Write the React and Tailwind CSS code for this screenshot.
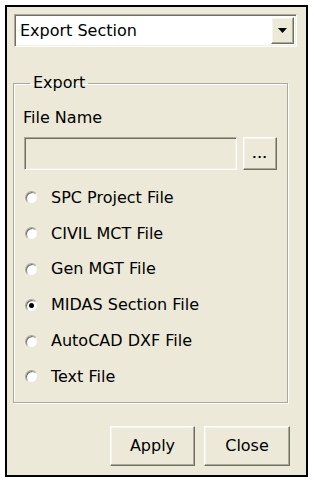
import { useState } from 'react'

const FONT = { fontFamily: '"DejaVu Sans", Verdana, sans-serif' }

const raised =
  'border border-t-white border-l-white border-b-[#716f64] border-r-[#716f64] shadow-[inset_-1px_-1px_0_#aca899,inset_1px_1px_0_#f5f4ea] bg-[#ece9d8]'
const sunken =
  'border border-t-[#aca899] border-l-[#aca899] border-b-white border-r-white shadow-[inset_1px_1px_0_#716f64,inset_-1px_-1px_0_#f1efe2]'

const OPTIONS = [
  'SPC Project File',
  'CIVIL MCT File',
  'Gen MGT File',
  'MIDAS Section File',
  'AutoCAD DXF File',
  'Text File',
]

function Radio({ label, checked, onSelect }) {
  return (
    <div className="flex items-center h-[35.8px] cursor-default" onClick={onSelect}>
      <span className="ml-[1px] w-[13px] h-[13px] rounded-full bg-white border border-t-[#aca899] border-l-[#aca899] border-b-[#e8e6dc] border-r-[#e8e6dc] shadow-[inset_1px_1px_0_#716f64] flex items-center justify-center">
        {checked && <span className="w-[5px] h-[5px] rounded-full bg-black" />}
      </span>
      <span className="ml-[13px] text-[16px] leading-[20px] text-black">{label}</span>
    </div>
  )
}

export default function App() {
  const [selected, setSelected] = useState(3)

  return (
    <div className="pt-[5px] pl-[5px]" style={FONT}>
      <div className="w-[303px] h-[472px] border-2 border-black bg-[#ece9d8] pt-[7px] pl-[6px]">
        {/* combo */}
        <div className={`ml-[1px] w-[283px] h-[33px] bg-white flex items-center ${sunken} p-[2px]`}>
          <span className="flex-1 pl-[3px] text-[16px] leading-[20px] text-black">Export Section</span>
          <div className={`w-[23px] h-full ${raised} flex items-center justify-center`}>
            <svg width="9" height="5" viewBox="0 0 9 5">
              <polygon points="0,0 9,0 4.5,5" fill="#000" />
            </svg>
          </div>
        </div>

        {/* group */}
        <fieldset className="mt-[26px] w-[275px] h-[330px] border border-[#aca899] shadow-[inset_1px_1px_0_#fff,1px_1px_0_#fff] pl-[10px]">
          <legend className="ml-[6px] px-[3px] text-[16px] leading-[20px] text-black">Export</legend>
          <div className="mt-[15px] -ml-[1px] text-[16px] leading-[20px] text-black">File Name</div>
          <div className="mt-[9px] flex items-center">
            <div className={`w-[213px] h-[33px] bg-[#ece9d8] ${sunken}`} />
            <div className={`ml-[6px] w-[34px] h-[33px] ${raised} flex items-end justify-center pb-[9px]`}>
              <span className="text-[11px] leading-[11px] tracking-[1px] text-black font-bold">...</span>
            </div>
          </div>
          <div className="mt-[10px]">
            {OPTIONS.map((o, i) => (
              <Radio key={o} label={o} checked={selected === i} onSelect={() => setSelected(i)} />
            ))}
          </div>
        </fieldset>

        {/* buttons */}
        <div className="mt-[23px] flex">
          <button className={`ml-[97px] w-[85px] h-[40px] ${raised} text-[16px] leading-[20px] text-black`}>Apply</button>
          <button className={`ml-[9px] w-[86px] h-[40px] ${raised} text-[16px] leading-[20px] text-black`}>Close</button>
        </div>
      </div>
    </div>
  )
}
